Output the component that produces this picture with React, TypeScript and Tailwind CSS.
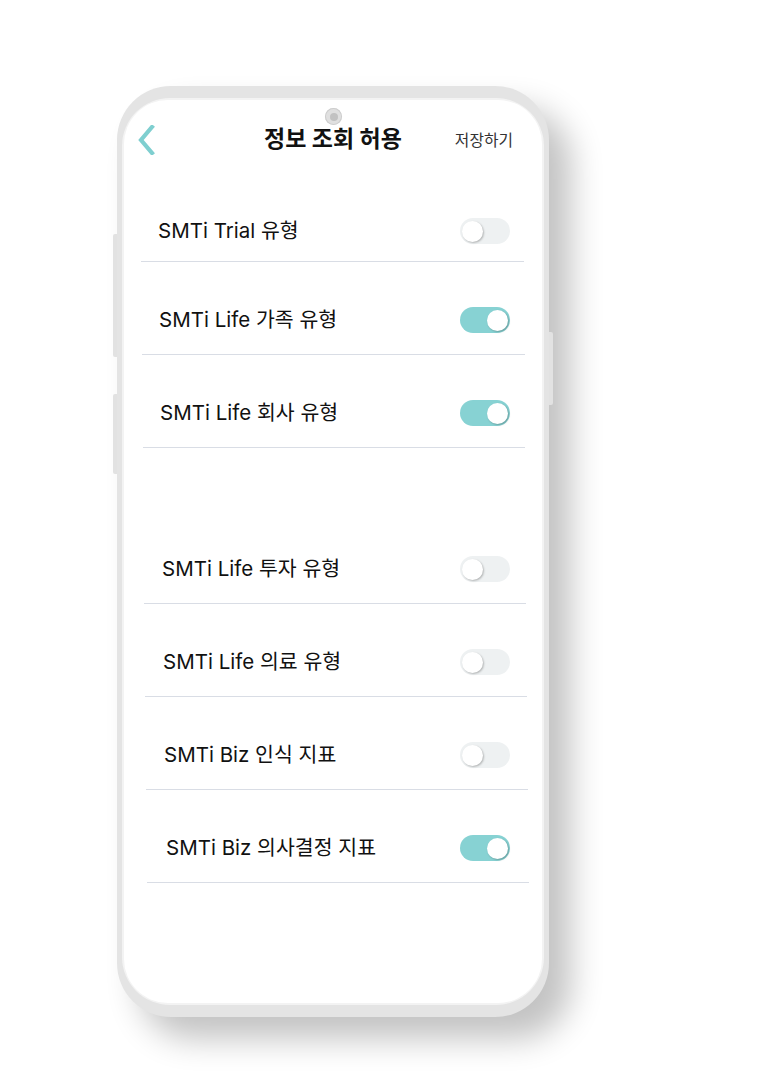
import React from "react";

const FONT = { fontFamily: 'Inter, "Noto Sans CJK KR", "Noto Sans", sans-serif' };

type Row = { label: string; on: boolean; wrap: string; inner: string };

const rowsTop: Row[] = [
  { label: "SMTi Trial 유형", on: false, wrap: "ml-[17px] mr-[18px] pt-[34px]", inner: "pl-[17px] pr-[14px]" },
  { label: "SMTi Life 가족 유형", on: true, wrap: "ml-[18px] mr-[17px] pt-[30px]", inner: "pl-[17px] pr-[15px]" },
  { label: "SMTi Life 회사 유형", on: true, wrap: "ml-[19px] mr-[17px] pt-[30px]", inner: "pl-[17px] pr-[15px]" },
];

const rowsBottom: Row[] = [
  { label: "SMTi Life 투자 유형", on: false, wrap: "ml-[20px] mr-[16px] pt-[30px]", inner: "pl-[18px] pr-[16px]" },
  { label: "SMTi Life 의료 유형", on: false, wrap: "ml-[21px] mr-[15px] pt-[30px]", inner: "pl-[18px] pr-[17px]" },
  { label: "SMTi Biz 인식 지표", on: false, wrap: "ml-[22px] mr-[14px] pt-[30px]", inner: "pl-[18px] pr-[18px]" },
  { label: "SMTi Biz 의사결정 지표", on: true, wrap: "ml-[23px] mr-[13px] pt-[30px]", inner: "pl-[19px] pr-[19px]" },
];

function Toggle({ on }: { on: boolean }) {
  return (
    <div
      className={
        "flex h-[26px] w-[50px] shrink-0 items-center rounded-full px-[2px] " +
        (on ? "justify-end bg-[#87d2d3]" : "justify-start bg-[#eef1f2]")
      }
    >
      <div className="h-[21px] w-[21px] rounded-full bg-white shadow-[1px_1px_2px_rgba(0,0,0,0.25)]" />
    </div>
  );
}

function SettingRow({ row }: { row: Row }) {
  return (
    <div className={"h-[93px] border-b border-[#d9dde5] " + row.wrap}>
      <div className={"flex h-[56px] items-center justify-between " + row.inner}>
        <span className="text-[20.5px] leading-none text-[#111111]">{row.label}</span>
        <Toggle on={row.on} />
      </div>
    </div>
  );
}

export default function App() {
  return (
    <div className="min-h-[1080px] w-[757px] bg-white" style={FONT}>
      <div className="pl-[117px] pt-[86px]">
        <div className="relative h-[931px] w-[432px] rounded-[54px] bg-[#e4e4e4] shadow-[22px_22px_32px_rgba(0,0,0,0.24)]">
          {/* side buttons */}
          <div className="absolute left-[-4px] top-[148px] h-[123px] w-[4px] rounded-l-[2px] bg-[#e2e2e2]" />
          <div className="absolute left-[-4px] top-[308px] h-[80px] w-[4px] rounded-l-[2px] bg-[#e2e2e2]" />
          <div className="absolute right-[-4px] top-[246px] h-[73px] w-[4px] rounded-r-[2px] bg-[#e2e2e2]" />

          <div className="h-full w-full rounded-[54px] pb-[12px] pl-[5px] pr-[5px] pt-[12px]">
            <div className="h-full w-full rounded-[48px] bg-[#f3f3f3] p-[2px]">
              <div className="relative h-full w-full overflow-hidden rounded-[44px] bg-white">
                {/* camera */}
                <div className="absolute left-[201px] top-[8px] flex h-[17px] w-[17px] items-center justify-center rounded-full bg-[#e0e0e0] shadow-[inset_0_0_0_1px_#cdcdcd]">
                  <div className="h-[8px] w-[8px] rounded-full bg-[#c2c2c2]" />
                </div>

                {/* header */}
                <div className="grid h-[69px] grid-cols-[1fr_auto_1fr] items-center pt-[10px]">
                  <div className="pl-[13px]">
                    <svg width="18" height="30" viewBox="0 0 18 30" fill="none">
                      <polyline
                        points="15,2 4,15 15,28"
                        stroke="#7fcfd0"
                        strokeWidth="4.2"
                        strokeLinecap="square"
                        strokeLinejoin="miter"
                      />
                    </svg>
                  </div>
                  <div className="text-[23px] font-bold leading-none text-[#111111]">정보 조회 허용</div>
                  <div className="flex justify-end pr-[29px] pt-[3px]">
                    <span className="text-[15.8px] leading-none text-[#333333]">저장하기</span>
                  </div>
                </div>

                {rowsTop.map((r) => (
                  <SettingRow key={r.label} row={r} />
                ))}
                <div className="h-[63px]" />
                {rowsBottom.map((r) => (
                  <SettingRow key={r.label} row={r} />
                ))}
              </div>
            </div>
          </div>
        </div>
      </div>
    </div>
  );
}
